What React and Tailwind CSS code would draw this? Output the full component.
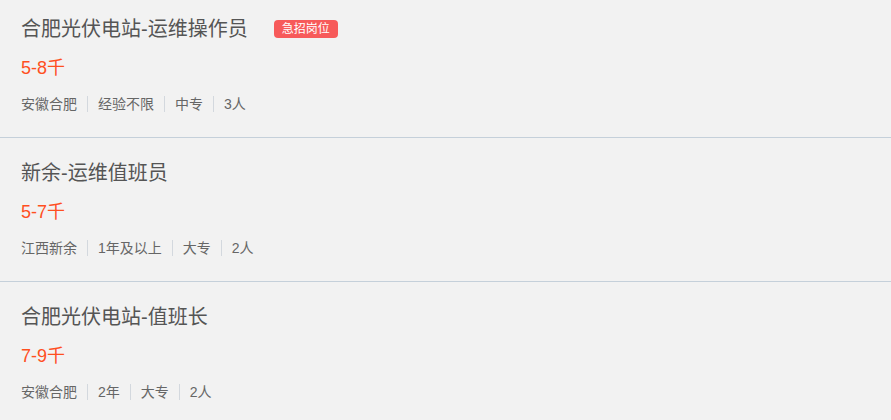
import React from 'react';

const jobs = [
    { title: '合肥光伏电站-运维操作员', urgent: true, salary: '5-8千', tags: ['安徽合肥', '经验不限', '中专', '3人'] },
    { title: '新余-运维值班员', urgent: false, salary: '5-7千', tags: ['江西新余', '1年及以上', '大专', '2人'] },
    { title: '合肥光伏电站-值班长', urgent: false, salary: '7-9千', tags: ['安徽合肥', '2年', '大专', '2人'] },
];

export default function App() {
    return (
        <div
            className="w-[891px] h-[420px] overflow-hidden bg-[#f2f2f2]"
            style={{ fontFamily: '"Liberation Sans", "Noto Sans CJK SC", sans-serif' }}
        >
            <div className="-mt-[6px]">
                {jobs.map((job, i) => (
                    <div key={i} className="h-[144px] px-[21px] pt-[21px] border-b border-[#c5d0da]">
                        {/* Title */}
                        <div className="flex items-center h-[28px]">
                            <span className="text-[20px] leading-[28px] text-[#555]">{job.title}</span>
                            {job.urgent && (
                                <span className="ml-[26px] h-[18px] px-[8px] rounded-[4px] bg-[#f75a5a] text-white text-[12px] leading-[18px]">
                                    急招岗位
                                </span>
                            )}
                        </div>

                        {/* Salary */}
                        <div className="mt-[13px] text-[18px] leading-[24px] text-[#ff4f1f]">{job.salary}</div>

                        {/* Tags */}
                        <div className="mt-[14px] flex items-center h-[20px] text-[14px] leading-[20px] text-[#666]">
                            {job.tags.map((tag, j) => (
                                <React.Fragment key={j}>
                                    {j > 0 && <span className="mx-[10px] w-px h-[16px] bg-[#d3d8de]"></span>}
                                    <span>{tag}</span>
                                </React.Fragment>
                            ))}
                        </div>
                    </div>
                ))}
            </div>
        </div>
    );
}
